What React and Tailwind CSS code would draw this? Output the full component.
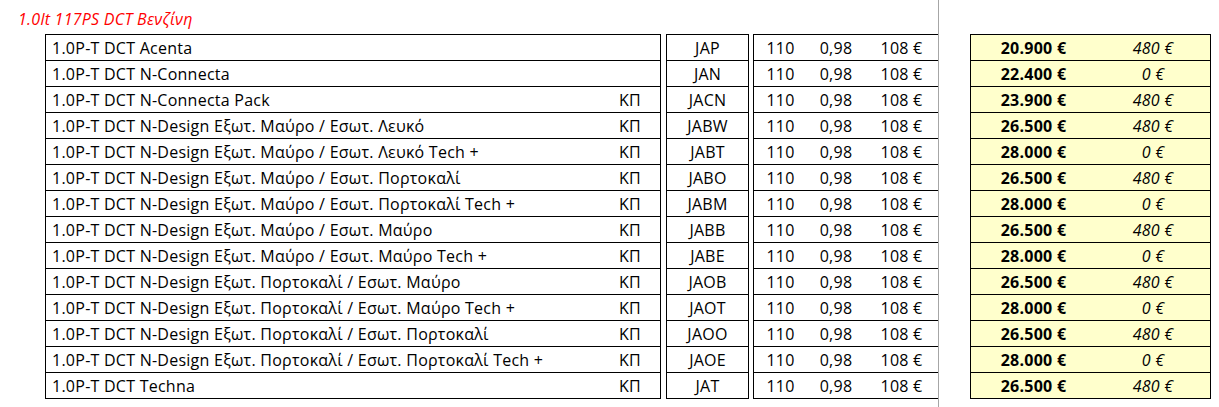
const rows = [
  ["1.0P-T DCT Acenta", "", "JAP", "20.900 €", "480 €"],
  ["1.0P-T DCT N-Connecta", "", "JAN", "22.400 €", "0 €"],
  ["1.0P-T DCT N-Connecta Pack", "ΚΠ", "JACN", "23.900 €", "480 €"],
  ["1.0P-T DCT N-Design Εξωτ. Μαύρο / Εσωτ. Λευκό", "ΚΠ", "JABW", "26.500 €", "480 €"],
  ["1.0P-T DCT N-Design Εξωτ. Μαύρο / Εσωτ. Λευκό Tech +", "ΚΠ", "JABT", "28.000 €", "0 €"],
  ["1.0P-T DCT N-Design Εξωτ. Μαύρο / Εσωτ. Πορτοκαλί", "ΚΠ", "JABO", "26.500 €", "480 €"],
  ["1.0P-T DCT N-Design Εξωτ. Μαύρο / Εσωτ. Πορτοκαλί Tech +", "ΚΠ", "JABM", "28.000 €", "0 €"],
  ["1.0P-T DCT N-Design Εξωτ. Μαύρο / Εσωτ. Μαύρο", "ΚΠ", "JABB", "26.500 €", "480 €"],
  ["1.0P-T DCT N-Design Εξωτ. Μαύρο / Εσωτ. Μαύρο Tech +", "ΚΠ", "JABE", "28.000 €", "0 €"],
  ["1.0P-T DCT N-Design Εξωτ. Πορτοκαλί / Εσωτ. Μαύρο", "ΚΠ", "JAOB", "26.500 €", "480 €"],
  ["1.0P-T DCT N-Design Εξωτ. Πορτοκαλί / Εσωτ. Μαύρο Tech +", "ΚΠ", "JAOT", "28.000 €", "0 €"],
  ["1.0P-T DCT N-Design Εξωτ. Πορτοκαλί / Εσωτ. Πορτοκαλί", "ΚΠ", "JAOO", "26.500 €", "480 €"],
  ["1.0P-T DCT N-Design Εξωτ. Πορτοκαλί / Εσωτ. Πορτοκαλί Tech +", "ΚΠ", "JAOE", "28.000 €", "0 €"],
  ["1.0P-T DCT Techna", "ΚΠ", "JAT", "26.500 €", "480 €"],
];

const row = "h-[26px] flex items-center border-b border-black";

const App = () => {
  return (
    <div
      className="relative w-[1219px] h-[407px] bg-white overflow-hidden text-[16px] tracking-[0.25px] text-black"
      style={{ fontFamily: '"Open Sans", "Noto Sans", sans-serif' }}
    >
      {/* page break line */}
      <div className="absolute left-[938px] top-0 h-full w-px bg-[#a6a6a6]" />

      {/* TITLE */}
      <div className="h-[34px] pl-[18px] pt-[8px] leading-[22px] italic text-[#ff0000] text-[16px]">
        1.0lt 117PS DCT Βενζίνη
      </div>

      <div className="flex">
        {/* MODEL */}
        <div className="ml-[45px] w-[616px] border-t border-x border-black">
          {rows.map((r, i) => (
            <div key={i} className={row}>
              <div className="flex-1 pl-[6px] whitespace-nowrap">{r[0]}</div>
              <div className="w-[60px] text-center">{r[1]}</div>
            </div>
          ))}
        </div>

        {/* CODE */}
        <div className="ml-[5px] w-[83px] border-t border-x border-black">
          {rows.map((r, i) => (
            <div key={i} className={row + " justify-center"}>
              {r[2]}
            </div>
          ))}
        </div>

        {/* CO2 / CONSUMPTION / TAX */}
        <div className="ml-[4px] w-[185px] border-t border-l border-black">
          {rows.map((r, i) => (
            <div key={i} className={row}>
              <div className="w-[53px] text-center">110</div>
              <div className="w-[58px] text-center">0,98</div>
              <div className="flex-1 text-center">108 €</div>
            </div>
          ))}
        </div>

        {/* PRICES */}
        <div className="ml-[32px] w-[241px] border-t border-x border-black bg-[#ffffcc]">
          {rows.map((r, i) => (
            <div key={i} className={row}>
              <div className="w-[125px] text-center font-bold">{r[3]}</div>
              <div className="flex-1 text-center italic">{r[4]}</div>
            </div>
          ))}
        </div>
      </div>
    </div>
  );
};

export default App;
